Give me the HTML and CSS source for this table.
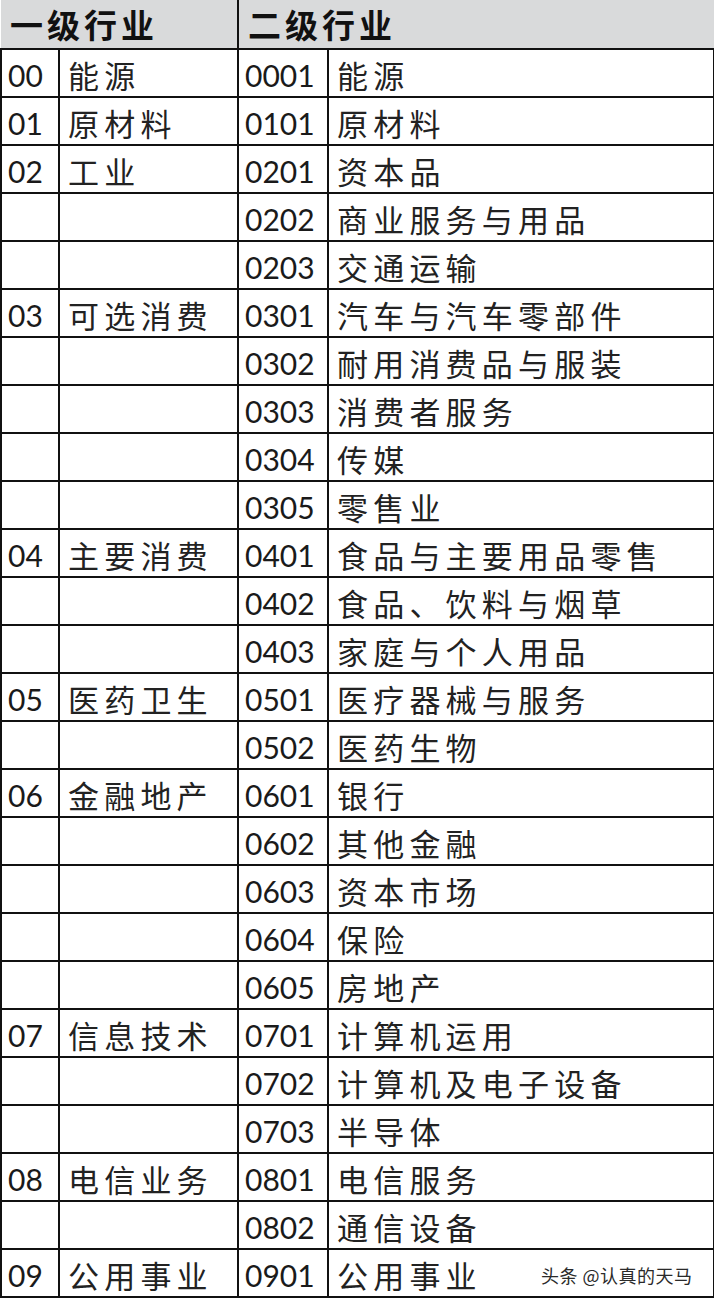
FILE: index.html
```html
<!DOCTYPE html>
<html lang="zh">
<head>
<meta charset="utf-8">
<link rel="stylesheet" href="styles.css">
</head>
<body>
<div class="page">
<table class="ind">
<colgroup><col class="c1"><col class="c2"><col class="c3"><col class="c4"></colgroup>
<thead>
<tr><th colspan="2" class="h1">一级行业</th><th colspan="2" class="h2">二级行业</th></tr>
</thead>
<tbody>
<tr><td class="n">00</td><td class="t">能源</td><td class="n">0001</td><td class="t">能源</td></tr>
<tr><td class="n">01</td><td class="t">原材料</td><td class="n">0101</td><td class="t">原材料</td></tr>
<tr><td class="n">02</td><td class="t">工业</td><td class="n">0201</td><td class="t">资本品</td></tr>
<tr><td class="n"></td><td class="t"></td><td class="n">0202</td><td class="t">商业服务与用品</td></tr>
<tr><td class="n"></td><td class="t"></td><td class="n">0203</td><td class="t">交通运输</td></tr>
<tr><td class="n">03</td><td class="t">可选消费</td><td class="n">0301</td><td class="t">汽车与汽车零部件</td></tr>
<tr><td class="n"></td><td class="t"></td><td class="n">0302</td><td class="t">耐用消费品与服装</td></tr>
<tr><td class="n"></td><td class="t"></td><td class="n">0303</td><td class="t">消费者服务</td></tr>
<tr><td class="n"></td><td class="t"></td><td class="n">0304</td><td class="t">传媒</td></tr>
<tr><td class="n"></td><td class="t"></td><td class="n">0305</td><td class="t">零售业</td></tr>
<tr><td class="n">04</td><td class="t">主要消费</td><td class="n">0401</td><td class="t">食品与主要用品零售</td></tr>
<tr><td class="n"></td><td class="t"></td><td class="n">0402</td><td class="t">食品、饮料与烟草</td></tr>
<tr><td class="n"></td><td class="t"></td><td class="n">0403</td><td class="t">家庭与个人用品</td></tr>
<tr><td class="n">05</td><td class="t">医药卫生</td><td class="n">0501</td><td class="t">医疗器械与服务</td></tr>
<tr><td class="n"></td><td class="t"></td><td class="n">0502</td><td class="t">医药生物</td></tr>
<tr><td class="n">06</td><td class="t">金融地产</td><td class="n">0601</td><td class="t">银行</td></tr>
<tr><td class="n"></td><td class="t"></td><td class="n">0602</td><td class="t">其他金融</td></tr>
<tr><td class="n"></td><td class="t"></td><td class="n">0603</td><td class="t">资本市场</td></tr>
<tr><td class="n"></td><td class="t"></td><td class="n">0604</td><td class="t">保险</td></tr>
<tr><td class="n"></td><td class="t"></td><td class="n">0605</td><td class="t">房地产</td></tr>
<tr><td class="n">07</td><td class="t">信息技术</td><td class="n">0701</td><td class="t">计算机运用</td></tr>
<tr><td class="n"></td><td class="t"></td><td class="n">0702</td><td class="t">计算机及电子设备</td></tr>
<tr><td class="n"></td><td class="t"></td><td class="n">0703</td><td class="t">半导体</td></tr>
<tr><td class="n">08</td><td class="t">电信业务</td><td class="n">0801</td><td class="t">电信服务</td></tr>
<tr><td class="n"></td><td class="t"></td><td class="n">0802</td><td class="t">通信设备</td></tr>
<tr><td class="n">09</td><td class="t">公用事业</td><td class="n">0901</td><td class="t last-cell">公用事业<span class="mark">头条 @认真的天马</span></td></tr>
</tbody>
</table>
</div>
</body>
</html>
```
FILE: styles.css
```css
html, body {
  margin: 0;
  padding: 0;
  background: #ffffff;
}
.page {
  width: 714px;
}
.ind {
  border-collapse: collapse;
  table-layout: fixed;
  width: 713px;
  color: #1a1a1a;
}
.c1 { width: 58px; }
.c2 { width: 179px; }
.c3 { width: 90px; }
.c4 { width: 386px; }
.ind th {
  height: 48px;
  padding: 0 0 0 9px;
  background: #d9dadb;
  text-align: left;
  font-family: "Noto Sans CJK SC", sans-serif;
  font-weight: 700;
  font-size: 33px;
  letter-spacing: 4px;
  line-height: 48px;
  border-bottom: 2px solid #111;
  color: #111;
  overflow: hidden;
}
.ind th.h2 {
  border-left: 2px solid #111;
  border-right: 1px solid #b8b8b8;
}
.ind td {
  height: 42px;
  border: 2px solid #111;
  padding: 4px 0 0 7px;
  line-height: 42px;
  vertical-align: middle;
  white-space: nowrap;
  overflow: visible;
}
.ind td.n {
  font-family: Lato, "Liberation Sans", sans-serif;
  font-size: 30px;
  letter-spacing: 0;
  padding-left: 6px;
}
.ind td.t {
  font-family: "Noto Sans CJK SC", sans-serif;
  font-weight: 400;
  font-size: 31px;
  letter-spacing: 5.2px;
  padding-left: 8px;
  color: #222;
}
.last-cell {
  position: relative;
}
.mark {
  position: absolute;
  left: 212px;
  top: 14px;
  line-height: 22px;
  font-family: "Noto Sans CJK SC", sans-serif;
  font-size: 18px;
  letter-spacing: 0.5px;
  color: #2a2a2a;
  text-shadow: 1px 1px 0 #fff, -1px -1px 0 #fff;
}
```
